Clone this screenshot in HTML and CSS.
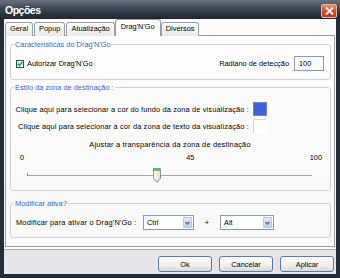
FILE: index.html
```html
<!DOCTYPE html>
<html lang="pt">
<head>
  <meta charset="UTF-8" />
  <title>Opções</title>
  <link rel="stylesheet" href="styles.css">
</head>
<body>

  <div class="window">
    <!-- Title bar -->
    <div class="titlebar">
      <span class="title">Opções</span>
      <span class="close">
        <svg width="9" height="8" viewBox="0 0 9 8"><path d="M1 0.5 L8 7.5 M8 0.5 L1 7.5" stroke="#fff" stroke-width="1.8" /></svg>
      </span>
    </div>

    <div class="client">
      <!-- Tabs -->
      <div class="tabs">
        <span class="tab">Geral</span>
        <span class="tab">Popup</span>
        <span class="tab">Atualização</span>
        <span class="tab active">Drag'N'Go</span>
        <span class="tab">Diversos</span>
      </div>

      <div class="panel">
        <fieldset class="group g1">
          <legend>Características do Drag'N'Go</legend>
          <div class="row">
            <label class="check">
              <span class="box">
                <svg width="6" height="6" viewBox="0 0 6 6"><path d="M0.6 2.8 L2.3 4.6 L5.4 1" fill="none" stroke="#21a121" stroke-width="1.4" /></svg>
              </span>
              Autorizar Drag'N'Go
            </label>
            <label class="radius">Radiano de detecção <span class="field">100</span></label>
          </div>
        </fieldset>

        <fieldset class="group g2">
          <legend>Estilo da zona de destinação :</legend>
          <div class="colors">
            <span class="pick">Clique aqui para selecionar a cor do fundo da zona de visualização :</span>
            <span class="swatch blue"></span>
            <span class="pick">Clique aqui para selecionar a cor da zona de texto da visualização :</span>
            <span class="swatch white"></span>
          </div>
          <div class="caption">Ajustar a transparência da zona de destinação</div>
          <div class="scale"><span>0</span><span class="mid">45</span><span class="max">100</span></div>
          <div class="slider">
            <span class="track"></span>
            <svg class="thumb" style="left: 45.6%" width="8" height="15" viewBox="0 0 8 15">
              <defs>
                <linearGradient id="tg" x1="0" y1="0" x2="1" y2="0">
                  <stop offset="0" stop-color="#ffffff" />
                  <stop offset="1" stop-color="#dcdcd6" />
                </linearGradient>
              </defs>
              <path d="M0.5 0.5 H7.5 V10.5 L4 14.5 L0.5 10.5 Z" fill="url(#tg)" stroke="#8c9494" />
              <rect x="1" y="1" width="6" height="2" fill="#5cc35c" />
              <path d="M1 10.6 L4 13.8 L7 10.6" fill="none" stroke="#6fcf6f" />
            </svg>
          </div>
        </fieldset>

        <fieldset class="group g3">
          <legend>Modificar ativa?</legend>
          <div class="row keys">
            <span class="key-label">Modificar para ativar o Drag'N'Go :</span>
            <span class="combo ctrl">
              <span class="value">Ctrl</span>
              <span class="drop"><svg width="5" height="4" viewBox="0 0 5 4"><path d="M0.5 0.8 L2.5 3 L4.5 0.8" fill="none" stroke="#4d6185" stroke-width="1.2" /></svg></span>
            </span>
            <span class="plus">+</span>
            <span class="combo alt">
              <span class="value">Alt</span>
              <span class="drop"><svg width="5" height="4" viewBox="0 0 5 4"><path d="M0.5 0.8 L2.5 3 L4.5 0.8" fill="none" stroke="#4d6185" stroke-width="1.2" /></svg></span>
            </span>
          </div>
        </fieldset>
      </div>

      <!-- Buttons -->
      <div class="footer">
        <button type="button">Ok</button>
        <button type="button">Cancelar</button>
        <button type="button">Aplicar</button>
      </div>
    </div>
  </div>

</body>
</html>
```

FILE: styles.css
```css
* { margin:0; padding:0; box-sizing: border-box; }
body {
  font-family: "Liberation Sans", Arial, sans-serif;
  font-size: 7.4px;
  line-height: 9px;
  color: #000;
  background: #fff;
}
.window {
  width: 340px;
  height: 278px;
  background: #242c38;
  display: flex;
  flex-direction: column;
}

/* title bar */
.titlebar {
  height: 19px;
  flex: none;
  background: linear-gradient(#66737f, #3c4756 45%, #1e2530);
  display: flex;
  align-items: center;
  justify-content: space-between;
  padding: 2px 3px 0 5px;
}
.title {
  color: #fff;
  font-weight: bold;
  font-size: 10.5px;
  letter-spacing: -0.5px;
}
.close {
  width: 16px;
  height: 14px;
  border: 1px solid #e9b3a4;
  border-radius: 2px;
  background: linear-gradient(#ee8a6c, #d24a26 55%, #c43a18);
  display: flex;
  align-items: center;
  justify-content: center;
}

/* client area */
.client {
  flex: 1;
  margin: 0 4px 4px;
  background: #fbfbfc;
  display: flex;
  flex-direction: column;
}
.tabs {
  height: 17px;
  display: flex;
  align-items: flex-end;
  padding: 0 1px;
  margin-bottom: -1px;
  position: relative;
  z-index: 1;
}
.tab {
  height: 14px;
  padding: 0 4px;
  margin-right: 1px;
  border: 1px solid #96a0a8;
  border-bottom: none;
  border-radius: 3px 3px 0 0;
  background: linear-gradient(#ffffff, #eceae6);
  line-height: 12px;
  white-space: nowrap;
}
.tab.active {
  height: 17px;
  margin: 0 0 0 -1px;
  padding: 0 5px;
  background: #fefefe;
  line-height: 14px;
}
.panel {
  height: 212px;
  margin: 0 1px;
  border: 1px solid #96a0a8;
  background: linear-gradient(#fefefe, #f8f8f6);
  padding: 4px 3px 0 4px;
}

/* group boxes */
.group {
  border: 1px solid #d2d2cc;
  border-radius: 3px;
  padding: 0 6px 0 5px;
  min-width: 0;
}
.group legend {
  color: #3d69c2;
  padding: 0 1px;
  margin-left: -2px;
  line-height: 9px;
}
.g1 { padding-top: 7px; padding-bottom: 8px; }
.g2 { margin-top: 3px; padding-top: 10px; padding-bottom: 7px; }
.g3 { margin-top: 8px; padding-top: 7px; padding-bottom: 7px; }

.row {
  display: flex;
  align-items: center;
  height: 15px;
}
.g1 .row { justify-content: space-between; }
.check { display: flex; align-items: center; }
.box {
  width: 8px;
  height: 8px;
  margin-right: 3px;
  border: 1px solid #1c5180;
  background: linear-gradient(135deg, #e4e4df, #ffffff);
  display: flex;
  align-items: center;
  justify-content: center;
}
.radius { display: flex; align-items: center; }
.field {
  width: 30px;
  height: 15px;
  margin-left: 5px;
  padding-left: 4px;
  border: 1px solid #7f9db9;
  background: #fff;
  line-height: 13px;
}

.colors {
  display: grid;
  grid-template-columns: 233px 14px;
  column-gap: 4px;
  row-gap: 3px;
  align-items: center;
}
.pick {
  justify-self: end;
  white-space: nowrap;
  letter-spacing: 0.14px;
}
.swatch {
  height: 14px;
  border: 1px solid #c8c8c8;
}
.swatch.blue { background: #3d63dc; border-color: #6c84c8; }
.swatch.white { background: #fff; border-color: #d4d4d4 #fff #fff #d4d4d4; }

.caption {
  margin-top: 7px;
  text-align: center;
  letter-spacing: 0.2px;
}
.scale {
  display: flex;
  margin-top: 4px;
  padding: 0 2px 0 4px;
}
.scale .mid { margin-left: 162px; }
.scale .max { margin-left: auto; }
.slider {
  position: relative;
  height: 16px;
  margin: 5px 12px 0 11px;
  padding-top: 8px;
}
.track {
  display: block;
  height: 2px;
  border-top: 1px solid #a4a8a8;
  border-bottom: 1px solid #ffffff;
  background: #e4e4e0;
}
.slider::before {
  content: "";
  position: absolute;
  left: 0;
  top: 6px;
  width: 1px;
  height: 3px;
  background: #8c9494;
}
.thumb {
  position: absolute;
  top: 1px;
  margin-left: -4px;
}

.key-label {
  width: 127px;
  white-space: nowrap;
  letter-spacing: 0.2px;
}
.combo {
  height: 15px;
  display: flex;
  border: 1px solid #7f9db9;
  background: #fff;
  padding: 1px;
}
.combo.ctrl { width: 51px; }
.combo.alt { width: 54px; }
.combo .value {
  flex: 1;
  padding-left: 2px;
  line-height: 11px;
}
.drop {
  width: 9px;
  border: 1px solid #b9c8e0;
  border-radius: 1px;
  background: linear-gradient(#e2ebfb, #c2d2ee);
  display: flex;
  align-items: center;
  justify-content: center;
}
.plus {
  width: 26px;
  text-align: center;
}

/* footer */
.footer {
  margin-top: auto;
  height: 25px;
  border-top: 1px solid #a6a6ae;
  background: #e8e5ea;
  display: flex;
  justify-content: flex-end;
  align-items: flex-end;
  gap: 7px;
  padding: 0 2px 2px 0;
}
button {
  width: 54px;
  height: 16px;
  border: 1px solid #5f78a4;
  border-radius: 3px;
  background: linear-gradient(#ffffff, #f0efec 60%, #dcdad6);
  font-family: inherit;
  font-size: 7.4px;
  color: #000;
}
```
